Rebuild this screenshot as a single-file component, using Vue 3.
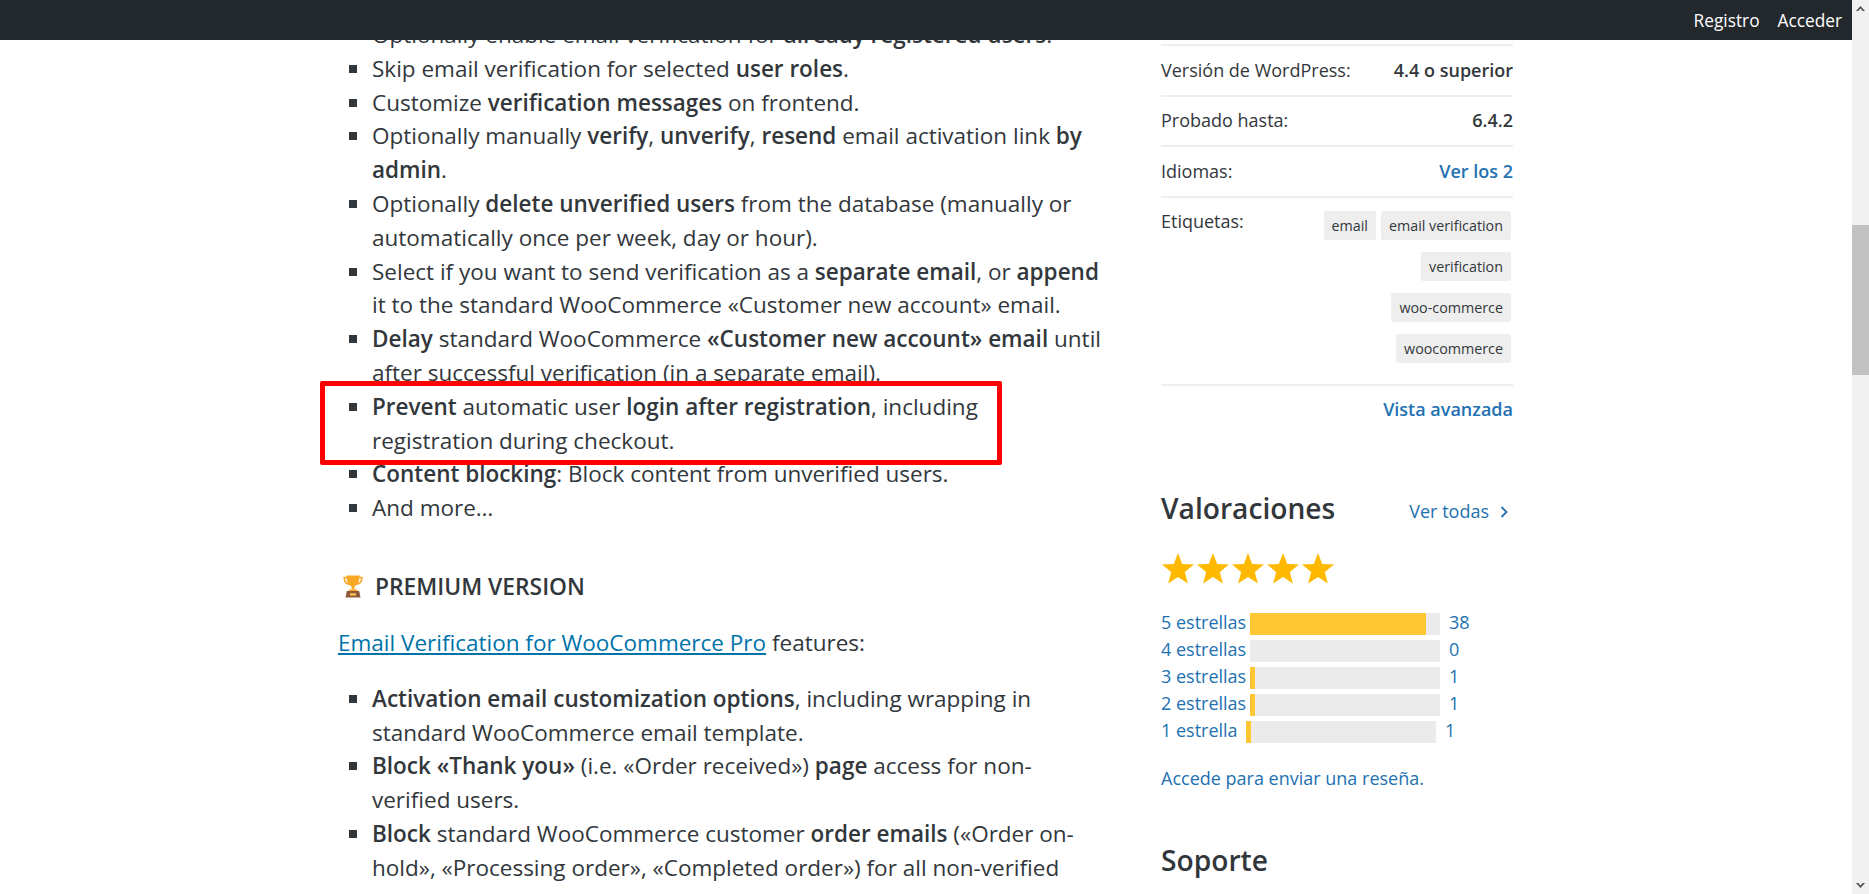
<script setup>
const tags = ['email', 'email verification', 'verification', 'woo-commerce', 'woocommerce']
const ratings = [
  { label: '5 estrellas', pct: 92.6, count: 38 },
  { label: '4 estrellas', pct: 0, count: 0 },
  { label: '3 estrellas', pct: 2.6, count: 1 },
  { label: '2 estrellas', pct: 2.6, count: 1 },
  { label: '1 estrella', pct: 2.6, count: 1, short: true }
]
</script>

<template>
  <div class="page">
    <div class="viewport">
      <header class="topbar">
        <a class="nav">Registro</a>
        <a class="nav">Acceder</a>
      </header>
      <div class="scroller">
        <div class="wrap">
          <main class="main">
            <ul class="list">
              <li>Optionally enable email verification for <b>already registered users</b>.</li>
              <li>Skip email verification for selected <b>user roles</b>.</li>
              <li>Customize <b>verification messages</b> on frontend.</li>
              <li>Optionally manually <b>verify</b>, <b>unverify</b>, <b>resend</b> email activation link <b>by admin</b>.</li>
              <li>Optionally <b>delete unverified users</b> from the database (manually or automatically once per week, day or hour).</li>
              <li>Select if you want to send verification as a <b>separate email</b>, or <b>append</b> it to the standard WooCommerce «Customer new account» email.</li>
              <li><b>Delay</b> standard WooCommerce <b>«Customer new account» email</b> until after successful verification (in a separate email).</li>
              <li class="marked"><b>Prevent</b> automatic user <b>login after registration</b>, including registration during checkout.<span class="redbox"></span></li>
              <li><b>Content blocking</b>: Block content from unverified users.</li>
              <li>And more…</li>
            </ul>
            <h3 class="premium">
              <svg class="trophy" viewBox="0 0 20 23" width="20" height="23">
                <path d="M4 2.500H1.200c0 4 1.600 6 4.600 6.600M16 2.500h2.800c0 4-1.600 6-4.600 6.600" fill="none" stroke="#f5a623" stroke-width="1.600"/>
                <path d="M3.500 0.500h13c0 6-1.600 9.500-5 10.800v3.200h-3v-3.200C5.100 10 3.500 6.500 3.500 0.500z" fill="#f9a825"/>
                <path d="M6 14.500h8l0.600 2H5.400z" fill="#f9a825"/>
                <path d="M3.800 16h12.400l1.300 6.500H2.500z" fill="#8d5a3c"/>
                <rect x="7" y="18.200" width="6" height="2.400" fill="#f9c14a"/>
              </svg>
              <span>PREMIUM VERSION</span>
            </h3>
            <p class="para"><a class="plink">Email Verification for WooCommerce Pro</a> features:</p>
            <ul class="list second">
              <li><b>Activation email customization options</b>, including wrapping in standard WooCommerce email template.</li>
              <li><b>Block «Thank you»</b> (i.e. «Order received») <b>page</b> access for non-verified users.</li>
              <li><b>Block</b> standard WooCommerce customer <b>order emails</b> («Order on-hold», «Processing order», «Completed order») for all non-verified users.</li>
            </ul>
          </main>
          <aside class="side">
            <div class="row"><span>Versión de WordPress:</span><strong>4.4 o superior</strong></div>
            <div class="row"><span>Probado hasta:</span><strong>6.4.2</strong></div>
            <div class="row"><span>Idiomas:</span><a class="link semi">Ver los 2</a></div>
            <div class="row tagsrow">
              <span>Etiquetas:</span>
              <div class="tags"><a v-for="t in tags" :key="t" class="tag">{{ t }}</a></div>
            </div>
            <div class="adv"><a class="link semi">Vista avanzada</a></div>

            <div class="sec-head">
              <h2 class="sec">Valoraciones</h2>
              <a class="link all">Ver todas
                <svg class="chev" viewBox="0 0 10 14" width="10" height="14"><path d="M2.500 2l5 5-5 5" fill="none" stroke="#2271b1" stroke-width="1.800"/></svg>
              </a>
            </div>
            <div class="stars">
              <svg v-for="n in 5" :key="n" viewBox="0 0 32 31" width="32" height="31"><polygon points="16,0 20.200,11 32,11.600 22.800,19 25.900,30.500 16,24 6.100,30.500 9.200,19 0,11.600 11.800,11" fill="#ffb900"/></svg>
            </div>
            <div class="ratings">
              <div v-for="r in ratings" :key="r.label" class="rate">
                <a class="link rlabel" :class="{ short: r.short }">{{ r.label }}</a>
                <div class="track"><div class="fill" :style="{ width: r.pct + '%' }"></div></div>
                <a class="link rcount">{{ r.count }}</a>
              </div>
            </div>
            <a class="link review">Accede para enviar una reseña.</a>
            <h2 class="sec support">Soporte</h2>
          </aside>
        </div>
      </div>
    </div>
    <div class="scrollbar">
      <svg class="arrow" viewBox="0 0 17 17" width="17" height="17"><path d="M8.500 6L13 11h-2.200L8.500 8.500 6.200 11H4z" fill="#505050"/></svg>
      <div class="sb-space top"></div>
      <div class="thumb"></div>
      <div class="sb-space"></div>
      <svg class="arrow" viewBox="0 0 17 17" width="17" height="17"><path d="M8.500 11L4 6h2.200l2.300 2.500L10.800 6H13z" fill="#505050"/></svg>
    </div>
  </div>
</template>

<style>
html, body { margin: 0; overflow: hidden; background: #fff; }
</style>

<style scoped>
.page {
  display: flex;
  height: 894px;
  overflow: hidden;
  font-family: "Open Sans", sans-serif;
  color: #32373c;
  background: #fff;
}
.viewport {
  flex: 1;
  min-width: 0;
  display: flex;
  flex-direction: column;
}
.topbar {
  position: relative;
  z-index: 2;
  flex: none;
  height: 40px;
  background: #23282d;
  display: flex;
  justify-content: flex-end;
  align-items: center;
  gap: 18px;
  padding-right: 10px;
}
.nav { color: #fff; font-size: 17.280px; }
.scroller { flex: 1; overflow: hidden; }
.wrap {
  width: 1176px;
  margin: 0 auto;
  display: flex;
  justify-content: space-between;
  align-items: flex-start;
}
.main { width: 763px; margin-top: -22px; font-size: 22.500px; line-height: 33.800px; }
.list { margin: 0; padding: 0 0 0 34px; list-style: square; }
.list b { font-weight: 600; }
.marked { position: relative; }
.redbox {
  position: absolute;
  left: -52px;
  top: -9px;
  width: 682px;
  height: 84px;
  box-sizing: border-box;
  border: 5px solid #fe0000;
  border-radius: 2px;
  pointer-events: none;
}
.premium {
  margin: 45px 0 0;
  display: flex;
  align-items: center;
  gap: 12px;
  padding-left: 5px;
  font-size: 22.800px;
  font-weight: 600;
  line-height: 34px;
}
.trophy { flex: none; }
.para { margin: 22px 0; }
.plink { color: #0073aa; text-decoration: underline; }
.side { width: 352px; margin: 4px 1px 0 0; font-size: 18px; line-height: 27px; }
.row {
  display: flex;
  justify-content: space-between;
  border-top: 2px solid #eee;
  padding: 10.830px 0;
  height: 27px;
  margin-top: 0;
}
.row strong { font-weight: 600; }
.tagsrow { height: auto; padding: 10px 0 21px; align-items: flex-start; }
.tags {
  flex: none;
  width: 200px;
  margin-top: 3px;
  display: flex;
  flex-wrap: wrap;
  justify-content: flex-end;
  gap: 12px 5px;
  padding-right: 2px;
  box-sizing: border-box;
}
.tag {
  background: #eee;
  border-radius: 2px;
  padding: 0 8px;
  height: 29px;
  line-height: 29px;
  font-size: 14.300px;
  color: #32373c;
}
.link { color: #2271b1; }
.semi { font-weight: 600; }
.adv {
  border-top: 2px solid #eee;
  padding-top: 10px;
  text-align: right;
}
.sec-head {
  display: flex;
  justify-content: space-between;
  align-items: center;
  margin-top: 67px;
  padding-right: 4px;
}
.sec { margin: 0; font-size: 28.160px; font-weight: 600; line-height: 36px; color: #32373c; }
.all { display: flex; align-items: center; gap: 10px; margin-top: 8px; }
.stars { display: flex; gap: 3px; margin: 27px 0 0 1px; }
.ratings { margin-top: 29px; display: flex; flex-direction: column; gap: 5px; }
.rate { display: flex; align-items: center; height: 22px; }
.rlabel { width: 89px; flex: none; white-space: nowrap; margin-top: -3px; }
.rlabel.short { width: 85px; }
.track { width: 190px; height: 22px; background: #ebebeb; flex: none; }
.fill { height: 100%; background: #ffc733; }
.rcount { margin-left: 9px; margin-top: -3px; }
.review { display: block; margin-top: 22px; }
.support { margin-top: 50px; }
.scrollbar {
  flex: none;
  width: 17px;
  background: #f1f1f1;
  display: flex;
  flex-direction: column;
}
.arrow { flex: none; }
.sb-space { flex: 1; }
.sb-space.top { flex: none; height: 208px; }
.thumb { flex: none; height: 150px; background: #c1c1c1; }
</style>
